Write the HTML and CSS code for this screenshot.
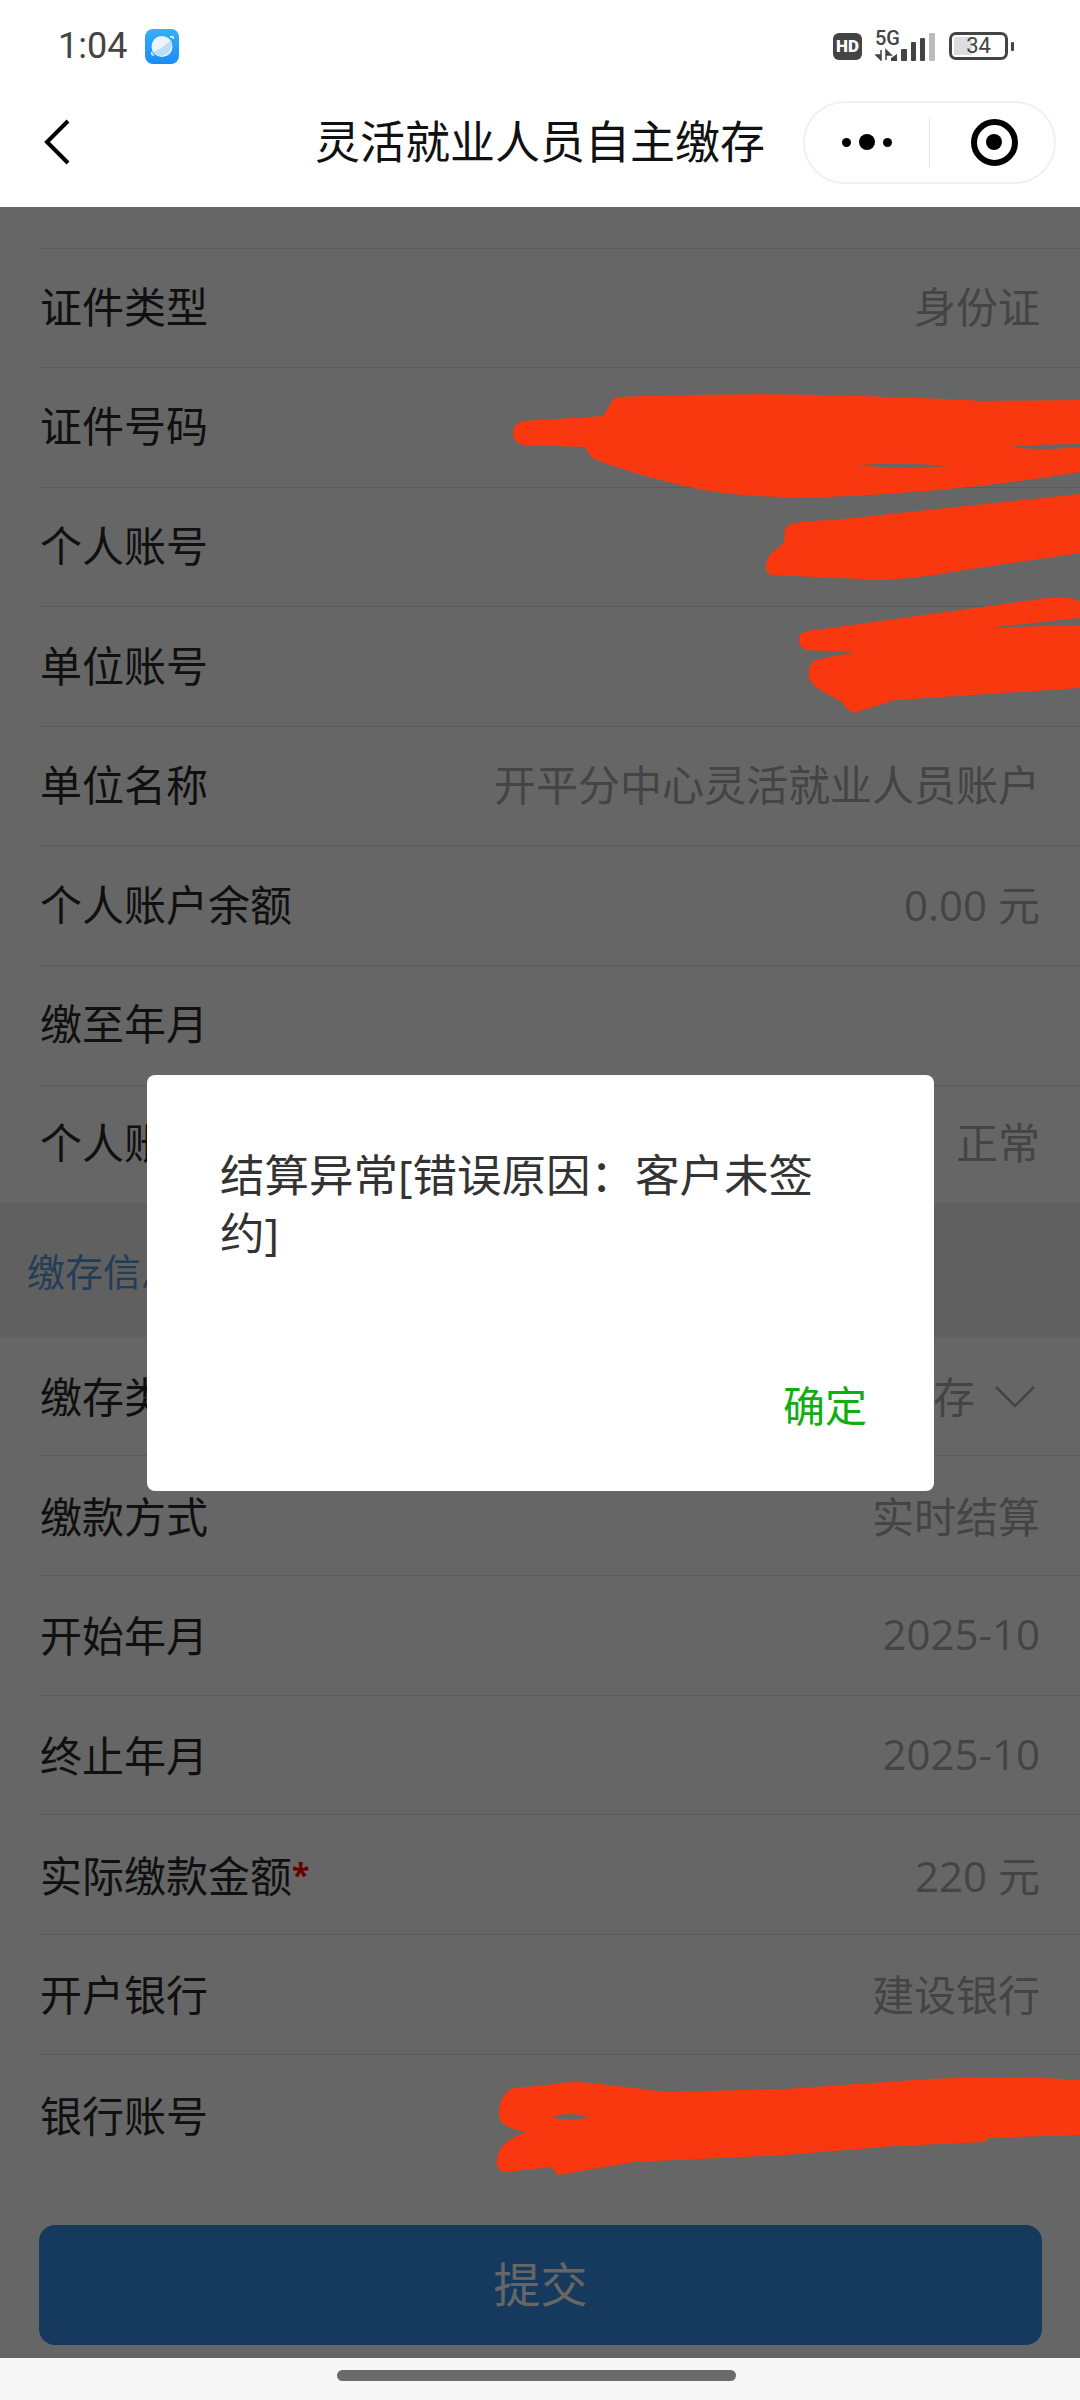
FILE: index.html
```html
<!DOCTYPE html>
<html>
  <head>
    <meta charset="utf-8">
    <title>灵活就业人员自主缴存</title>
    <link rel="stylesheet" href="styles.css">
  </head>
  <body>
    <div class="statusbar">
      <div class="status-left">
        <span class="time">1:04</span>
        <svg class="app-icon" width="34" height="35" viewBox="0 0 34 35">
          <defs>
            <linearGradient id="appblue" x1="0" y1="0" x2="0" y2="1">
              <stop offset="0" stop-color="#35b0f8"/>
              <stop offset="1" stop-color="#1c8cf5"/>
            </linearGradient>
          </defs>
          <rect width="34" height="35" rx="8" fill="url(#appblue)"/>
          <circle cx="17" cy="17.5" r="10.5" fill="#eaf5fe"/>
          <path d="M8 23c6-2 13-7 18-12 2 6-1 13-6 15-5 2-9 1-12-3z" fill="#bcdff9"/>
          <path d="M9 26c-2 0-3-1-2-3M25 8c3-1 4 0 3 2" stroke="#eaf5fe" stroke-width="1.6" fill="none"/>
        </svg>
      </div>
      <div class="status-right">
        <span class="hd">HD</span>
        <svg class="net" width="60" height="36" viewBox="0 -6 60 36">
          <text x="0" y="14" class="net-label">5G</text>
          <path d="M6 19v10M6 29l-5-5h5zM11 29V19M11 19l5 5h-5z" stroke="#444" stroke-width="1.5" fill="#444"/>
          <path d="M16 30v-3l6-4v7z" fill="#444"/>
          <rect x="26" y="18" width="6" height="12" rx="1" fill="#444"/>
          <rect x="36" y="11" width="5" height="19" rx="1" fill="#444"/>
          <rect x="45" y="7" width="5" height="23" rx="1" fill="#444"/>
          <rect x="54" y="2" width="6" height="28" rx="1" fill="#bbb"/>
        </svg>
        <div class="battery">
          <div class="battery-fill"></div>
          <span class="battery-num">34</span>
        </div>
        <span class="battery-nub"></span>
      </div>
    </div>

    <div class="navbar">
      <svg class="back" width="26" height="46" viewBox="0 0 26 46"><path d="M24 2L3 23l21 21" stroke="#000" stroke-width="4" fill="none"/></svg>
      <h1 class="title">灵活就业人员自主缴存</h1>
      <div class="capsule">
        <div class="capsule-btn">
          <span class="dot"></span>
          <span class="dot dot-big"></span>
          <span class="dot"></span>
        </div>
        <span class="capsule-line"></span>
        <div class="capsule-btn">
          <span class="target"></span>
        </div>
      </div>
    </div>

    <div class="page">
      <div class="row-stub"></div>
      <div class="group group-top">
        <div class="row"><span class="label">证件类型</span><span class="value">身份证</span></div>
        <div class="row"><span class="label">证件号码</span></div>
        <div class="row"><span class="label">个人账号</span></div>
        <div class="row"><span class="label">单位账号</span></div>
        <div class="row"><span class="label">单位名称</span><span class="value">开平分中心灵活就业人员账户</span></div>
        <div class="row"><span class="label">个人账户余额</span><span class="value">0.00 元</span></div>
        <div class="row"><span class="label">缴至年月</span></div>
        <div class="row row-last"><span class="label">个人账户状态</span><span class="value">正常</span></div>
      </div>

      <div class="section">缴存信息</div>

      <div class="group">
        <div class="row">
          <span class="label">缴存类型</span>
          <span class="value value-select">
            自主缴存
            <svg class="chevron" width="40" height="22" viewBox="0 0 40 22"><path d="M1 1l19 19L39 1" stroke="#aaa" stroke-width="2.5" fill="none"/></svg>
          </span>
        </div>
        <div class="row"><span class="label">缴款方式</span><span class="value">实时结算</span></div>
        <div class="row"><span class="label">开始年月</span><span class="value">2025-10</span></div>
        <div class="row"><span class="label">终止年月</span><span class="value">2025-10</span></div>
        <div class="row"><span class="label">实际缴款金额<em class="star">*</em></span><span class="value">220 元</span></div>
        <div class="row"><span class="label">开户银行</span><span class="value">建设银行</span></div>
        <div class="row row-end"><span class="label">银行账号</span></div>
      </div>

      <div class="submit-wrap">
        <div class="submit">提交</div>
      </div>

      <div class="mask"></div>

      <!-- scribbles the user drew over the account numbers -->
      <svg class="scribble" width="1080" height="2151" viewBox="0 207 1080 2151">
        <g fill="#f9380f">
          <path fill-rule="evenodd" d="M513 432Q514 423 523 421L603 416 615 397Q740 392 861 396T978 401L1080 400V472Q960 492 826 497 740 499 689 487 625 472 592 458L585 447 523 445Q512 442 513 432ZM857 465Q900 470 950 466 900 462 857 465ZM1009 447Q1045 451 1080 447V444Q1040 444 1009 447Z"/>
          <path d="M785 528Q788 521 833 520L1080 494V553L964 570Q900 582 861 579L771 575Q764 570 766 567 766 556 775 550L784 543Z"/>
          <path d="M799 638Q800 630 816 630L1047 598Q1075 596 1080 602V618L985 628 1080 625V688L895 700 854 713Q846 710 842 702L820 690Q806 680 809 673 808 664 816 660L854 652 806 650Q798 646 799 638Z"/>
          <path fill-rule="evenodd" d="M499 2115Q499 2095 513 2088L547 2085Q570 2080 592 2083L668 2092 785 2089 930 2079Q1010 2075 1080 2080V2135L988 2138 985 2142 895 2146 785 2155 634 2162 558 2175 551 2167 506 2172Q495 2170 497 2160 497 2142 527 2132 499 2128 499 2115ZM551 2117Q570 2122 589 2117 570 2111 551 2117Z"/>
        </g>
      </svg>

      <div class="dialog">
        <p class="dialog-text">结算异常[错误原因：客户未签约]</p>
        <div class="dialog-foot"><span class="dialog-ok">确定</span></div>
      </div>
    </div>

    <div class="homebar"><span class="home-line"></span></div>
  </body>
</html>
```

FILE: styles.css
```css
* {
  box-sizing: border-box;
}

html,
body {
  margin: 0;
  padding: 0;
}

body {
  width: 1080px;
  height: 2400px;
  overflow: hidden;
  background-color: #fff;
  color: #333;
  font-family: "Open Sans", "Noto Sans CJK SC", sans-serif;
}

/* status bar */
.statusbar {
  height: 84px;
  display: flex;
  align-items: center;
  justify-content: space-between;
  padding: 8px 66px 0 58px;
}

.status-left {
  display: flex;
  align-items: center;
  gap: 18px;
}

.time {
  font-family: Roboto, sans-serif;
  font-size: 36px;
  color: #444;
}

.status-right {
  display: flex;
  align-items: center;
}

.hd {
  width: 29px;
  height: 27px;
  border-radius: 6px;
  background-color: #444;
  color: #fff;
  font-family: Roboto, sans-serif;
  font-size: 17px;
  font-weight: 900;
  line-height: 27px;
  text-align: center;
}

.net {
  margin: -6px 0 0 13px;
}

.net-label {
  font-family: Roboto, sans-serif;
  font-size: 20px;
  font-weight: 500;
  fill: #444;
}

.battery {
  position: relative;
  width: 59px;
  height: 28px;
  margin-left: 14px;
  border: 3px solid #444;
  border-radius: 7px;
  text-align: center;
}

.battery-fill {
  position: absolute;
  left: 2px;
  top: 2px;
  bottom: 2px;
  width: 18px;
  background-color: #ddd;
}

.battery-num {
  position: relative;
  display: block;
  font-family: Roboto, sans-serif;
  font-size: 22px;
  line-height: 22px;
  color: #444;
}

.battery-nub {
  width: 3px;
  height: 9px;
  margin-left: 3px;
  background-color: #444;
  border-radius: 1px;
}

/* nav */
.navbar {
  height: 123px;
  display: grid;
  grid-template-columns: 1fr auto 1fr;
  align-items: center;
  padding: 0 24px 7px;
}

.back {
  display: block;
  margin-left: 20px;
}

.title {
  margin: 0 0 5px;
  font-size: 45px;
  font-weight: 400;
  color: #111;
}

.capsule {
  justify-self: end;
  width: 253px;
  height: 83px;
  border: 2px solid #f0f0f0;
  border-radius: 42px;
  display: flex;
  align-items: center;
}

.capsule-btn {
  flex: 1;
  display: flex;
  align-items: center;
  justify-content: center;
  gap: 8px;
}

.capsule-line {
  width: 1px;
  height: 51px;
  background-color: #e6e6e6;
}

.dot {
  width: 9px;
  height: 9px;
  border-radius: 50%;
  background-color: #000;
}

.dot-big {
  width: 16px;
  height: 16px;
}

.target {
  width: 47px;
  height: 47px;
  margin-left: 4px;
  border-radius: 50%;
  border: 6px solid #000;
  display: flex;
  align-items: center;
  justify-content: center;
}

.target::after {
  content: "";
  width: 16px;
  height: 16px;
  border-radius: 50%;
  background-color: #000;
}

/* form */
.page {
  position: relative;
  height: 2151px;
  background-color: #fff;
}

.row-stub {
  height: 41.5px;
  margin-left: 40px;
  border-bottom: 1px solid #e0e0e0;
}

.row {
  height: 119.7px;
  margin-left: 40px;
  padding-right: 40px;
  padding-bottom: 3px;
  display: flex;
  align-items: center;
  justify-content: space-between;
  border-bottom: 1px solid #e0e0e0;
  font-size: 42px;
}

.group-top .row {
  height: 119.6px;
  padding-bottom: 7px;
}

.group-top .row-last {
  height: 117px;
  border-bottom: none;
}

.row-end {
  height: 120px;
  border-bottom: none;
}

.label {
  color: #2a2a2a;
}

.value {
  color: #aaa;
}

.value-select {
  display: flex;
  align-items: center;
  gap: 20px;
  margin-right: 5px;
}

.chevron {
  margin-top: 4px;
}

.star {
  color: #f00;
  font-style: normal;
  font-weight: 700;
  font-size: 32px;
  vertical-align: 5px;
}

.section {
  height: 134px;
  padding-left: 27px;
  display: flex;
  align-items: center;
  background-color: #f0f0f0;
  color: #5b9ad8;
  font-size: 38px;
}

.submit-wrap {
  padding: 50px 38px 0 39px;
}

.submit {
  height: 120px;
  border-radius: 16px;
  background-color: #3591e8;
  color: #fff;
  font-size: 47px;
  line-height: 118px;
  text-align: center;
}

/* popup */
.mask {
  position: absolute;
  left: 0;
  top: 0;
  right: 0;
  bottom: 0;
  background-color: rgba(0, 0, 0, 0.6);
}

.scribble {
  position: absolute;
  left: 0;
  top: 0;
}

.dialog {
  position: absolute;
  left: 147px;
  top: 868px;
  width: 787px;
  height: 416px;
  padding: 71px 67px 0 73px;
  background-color: #fff;
  border-radius: 8px;
  display: flex;
  flex-direction: column;
  justify-content: space-between;
}

.dialog-text {
  margin: 0;
  padding-right: 30px;
  font-size: 44.5px;
  line-height: 58px;
  color: #333;
}

.dialog-foot {
  padding-bottom: 57px;
  text-align: right;
}

.dialog-ok {
  font-size: 42px;
  color: #12ad12;
}

/* bottom */
.homebar {
  height: 42px;
  padding-top: 12px;
  background-color: #f7f7f7;
  display: flex;
  justify-content: center;
}

.home-line {
  width: 399px;
  height: 11px;
  margin-left: -8px;
  border-radius: 6px;
  background-color: #6b6b6b;
}
```
